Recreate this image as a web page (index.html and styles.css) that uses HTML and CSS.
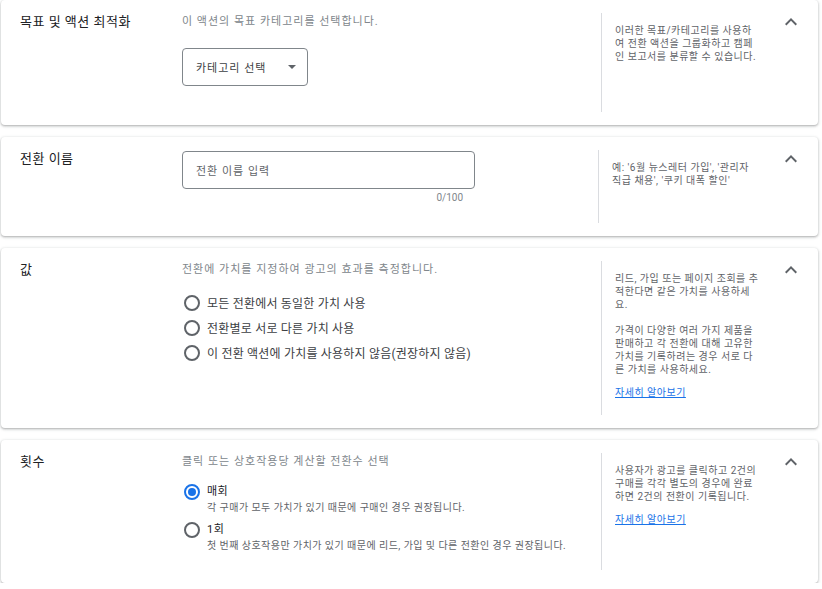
FILE: index.html
```html
<!DOCTYPE html>
<html lang="ko">
<head>
<meta charset="utf-8">
<title>전환 액션</title>
<link rel="stylesheet" href="styles.css">
</head>
<body>
<div class="page">
  <section class="card card--goal">
    <div class="card-title">목표 및 액션 최적화</div>
    <div class="card-main">
      <div class="card-desc">이 액션의 목표 카테고리를 선택합니다.</div>
      <div class="select"><span>카테고리 선택</span><span class="select-arrow"></span></div>
    </div>
    <div class="divider"></div>
    <div class="card-help">
      <p>이러한 목표/카테고리를 사용하<br>여 전환 액션을 그룹화하고 캠페<br>인 보고서를 분류할 수 있습니다.</p>
    </div>
    <div class="card-toggle"><svg viewBox="0 0 24 24" width="24" height="24"><path d="M12 8l-6 6 1.41 1.41L12 10.83l4.59 4.58L18 14z"/></svg></div>
  </section>

  <section class="card card--name">
    <div class="card-title">전환 이름</div>
    <div class="card-main">
      <div class="text-field">전환 이름 입력</div>
      <div class="counter">0/100</div>
    </div>
    <div class="divider"></div>
    <div class="card-help">
      <p>예: '6월 뉴스레터 가입', '관리자<br>직급 채용', '쿠키 대폭 할인'</p>
    </div>
    <div class="card-toggle"><svg viewBox="0 0 24 24" width="24" height="24"><path d="M12 8l-6 6 1.41 1.41L12 10.83l4.59 4.58L18 14z"/></svg></div>
  </section>

  <section class="card card--value">
    <div class="card-title">값</div>
    <div class="card-main">
      <div class="card-desc">전환에 가치를 지정하여 광고의 효과를 측정합니다.</div>
      <div class="radio-list">
        <label class="radio"><span class="radio-btn"></span>모든 전환에서 동일한 가치 사용</label>
        <label class="radio"><span class="radio-btn"></span>전환별로 서로 다른 가치 사용</label>
        <label class="radio"><span class="radio-btn"></span>이 전환 액션에 가치를 사용하지 않음(권장하지 않음)</label>
      </div>
    </div>
    <div class="divider"></div>
    <div class="card-help">
      <p>리드, 가입 또는 페이지 조회를 추<br>적한다면 같은 가치를 사용하세<br>요.</p>
      <p class="help-para">가격이 다양한 여러 가지 제품을<br>판매하고 각 전환에 대해 고유한<br>가치를 기록하려는 경우 서로 다<br>른 가치를 사용하세요.</p>
      <a class="help-link" href="#">자세히 알아보기</a>
    </div>
    <div class="card-toggle"><svg viewBox="0 0 24 24" width="24" height="24"><path d="M12 8l-6 6 1.41 1.41L12 10.83l4.59 4.58L18 14z"/></svg></div>
  </section>

  <section class="card card--count">
    <div class="card-title">횟수</div>
    <div class="card-main">
      <div class="card-desc">클릭 또는 상호작용당 계산할 전환수 선택</div>
      <div class="option-list">
        <div class="option">
          <span class="radio-btn radio-btn--checked"></span>
          <span class="option-label">매회</span>
          <span class="option-sub">각 구매가 모두 가치가 있기 때문에 구매인 경우 권장됩니다.</span>
        </div>
        <div class="option">
          <span class="radio-btn"></span>
          <span class="option-label">1회</span>
          <span class="option-sub">첫 번째 상호작용만 가치가 있기 때문에 리드, 가입 및 다른 전환인 경우 권장됩니다.</span>
        </div>
      </div>
    </div>
    <div class="divider"></div>
    <div class="card-help">
      <p>사용자가 광고를 클릭하고 2건의<br>구매를 각각 별도의 경우에 완료<br>하면 2건의 전환이 기록됩니다.</p>
      <a class="help-link" href="#">자세히 알아보기</a>
    </div>
    <div class="card-toggle"><svg viewBox="0 0 24 24" width="24" height="24"><path d="M12 8l-6 6 1.41 1.41L12 10.83l4.59 4.58L18 14z"/></svg></div>
  </section>
</div>
</body>
</html>
```

FILE: styles.css
```css
* { box-sizing: border-box; }

body {
  margin: 0;
  background: #ffffff;
  font-family: Roboto, "Noto Sans CJK KR", sans-serif;
  color: #202124;
}

.page {
  display: flex;
  flex-direction: column;
  gap: 12px;
  padding: 0 4px 0 1px;
}

.card {
  display: flex;
  background: #ffffff;
  border-radius: 4px;
  box-shadow: 0 1px 2px 0 rgba(60, 64, 67, 0.3), 0 1px 3px 1px rgba(60, 64, 67, 0.12);
}

.card--goal { min-height: 125px; }
.card--name { min-height: 99px; }
.card--value { min-height: 180px; }
.card--count { min-height: 143px; }

.card-title {
  flex: 0 0 181px;
  padding: 12px 0 0 19px;
  font-size: 13px;
  line-height: 20px;
  letter-spacing: 0.5px;
  color: #202124;
}

.card-main {
  flex: 0 0 419px;
  padding-top: 12px;
}

.card--name .card-main { flex-basis: 416px; }

.card-desc {
  font-size: 11px;
  line-height: 20px;
  letter-spacing: 1px;
  color: #80868b;
}

.select {
  margin-top: 16px;
  width: 126px;
  height: 38px;
  border: 1px solid #80868b;
  border-radius: 4px;
  display: flex;
  align-items: center;
  justify-content: space-between;
  padding: 0 11px 0 13px;
  font-size: 11px;
  letter-spacing: 1px;
  color: #3c4043;
}

.select-arrow {
  width: 0;
  height: 0;
  border-left: 4px solid transparent;
  border-right: 4px solid transparent;
  border-top: 4px solid #5f6368;
}

.text-field {
  margin-top: 2px;
  width: 293px;
  height: 38px;
  border: 1px solid #80868b;
  border-radius: 4px;
  display: flex;
  align-items: center;
  padding-left: 13px;
  font-size: 11px;
  letter-spacing: 1px;
  color: #5f6368;
}

.counter {
  width: 293px;
  margin-top: 3px;
  padding-right: 12px;
  text-align: right;
  font-size: 10px;
  line-height: 12px;
  color: #80868b;
}

.divider {
  flex: 0 0 1px;
  background: #dadce0;
  margin: 13px 0;
}

.card-help {
  flex: 0 0 155px;
  padding: 24px 0 0 13px;
  font-size: 10px;
  line-height: 13px;
  letter-spacing: 0.5px;
  color: #5f6368;
}

.card-help p { margin: 0; white-space: nowrap; }
.card-help .help-para { margin-top: 13px; }

.help-link {
  display: inline-block;
  margin-top: 10px;
  color: #1a73e8;
  text-decoration: underline;
}

.card-toggle {
  margin-left: auto;
  padding: 10px 15px 0 0;
}

.card-toggle svg { display: block; fill: #5f6368; }

.radio-list {
  margin-top: 10px;
  display: flex;
  flex-direction: column;
}

.radio {
  display: flex;
  align-items: center;
  gap: 7px;
  height: 25px;
  padding-left: 2px;
  font-size: 12px;
  letter-spacing: 0.2px;
  color: #3c4043;
}

.radio-btn {
  position: relative;
  flex: 0 0 16px;
  width: 16px;
  height: 16px;
  border: 2px solid #5f6368;
  border-radius: 50%;
}

.radio-btn--checked { border-color: #1a73e8; }

.radio-btn--checked::after {
  content: "";
  position: absolute;
  left: 2px;
  top: 2px;
  width: 8px;
  height: 8px;
  border-radius: 50%;
  background: #1a73e8;
}

.option-list {
  margin-top: 12px;
  display: flex;
  flex-direction: column;
  gap: 6px;
}

.option {
  display: grid;
  grid-template-columns: 16px 1fr;
  column-gap: 7px;
  padding-left: 2px;
  align-items: center;
}

.option-label {
  font-size: 11px;
  line-height: 16px;
  letter-spacing: 0.5px;
  color: #202124;
}

.option-sub {
  grid-column: 2;
  font-size: 10px;
  line-height: 16px;
  letter-spacing: 0.45px;
  color: #5f6368;
}
```
